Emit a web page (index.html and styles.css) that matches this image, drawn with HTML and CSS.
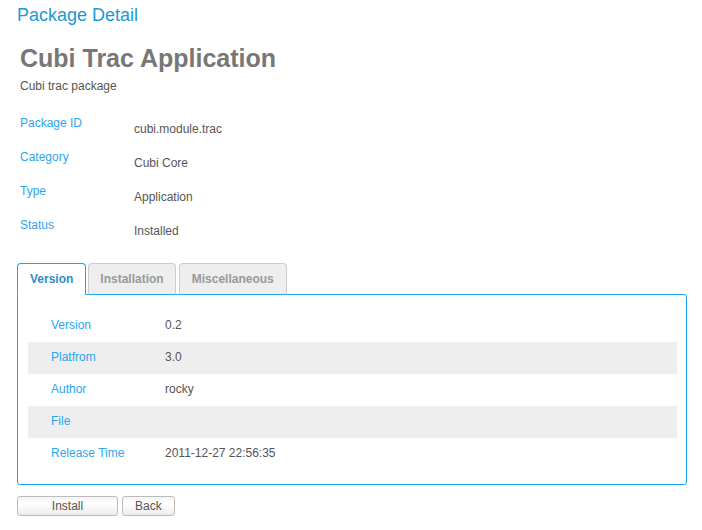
FILE: index.html
```html
<!DOCTYPE html>
<html>
<head>
<meta charset="utf-8">
<title>Package Detail</title>
<link rel="stylesheet" href="styles.css">
</head>
<body>
<div class="page">
  <h1 class="page-title">Package Detail</h1>
  <div class="summary">
    <h2 class="app-title">Cubi Trac Application</h2>
    <p class="app-desc">Cubi trac package</p>
    <div class="info">
      <div class="info-row"><span class="info-label">Package ID</span><span class="info-value">cubi.module.trac</span></div>
      <div class="info-row"><span class="info-label">Category</span><span class="info-value">Cubi Core</span></div>
      <div class="info-row"><span class="info-label">Type</span><span class="info-value">Application</span></div>
      <div class="info-row"><span class="info-label">Status</span><span class="info-value">Installed</span></div>
    </div>
  </div>
  <div class="tabs">
    <div class="tab tab-active">Version</div>
    <div class="tab">Installation</div>
    <div class="tab tab-last">Miscellaneous</div>
  </div>
  <div class="panel">
    <div class="detail-row"><span class="detail-label">Version</span><span class="detail-value">0.2</span></div>
    <div class="detail-row alt"><span class="detail-label">Platfrom</span><span class="detail-value">3.0</span></div>
    <div class="detail-row"><span class="detail-label">Author</span><span class="detail-value">rocky</span></div>
    <div class="detail-row alt"><span class="detail-label">File</span><span class="detail-value"></span></div>
    <div class="detail-row"><span class="detail-label">Release Time</span><span class="detail-value">2011-12-27 22:56:35</span></div>
  </div>
  <div class="actions">
    <button class="btn btn-wide">Install</button>
    <button class="btn">Back</button>
  </div>
</div>
</body>
</html>
```

FILE: styles.css
```css
html, body {
  margin: 0;
  padding: 0;
  background: #fff;
}
body {
  font-family: "Liberation Sans", Arial, sans-serif;
  font-size: 12px;
  color: #555;
}
.page {
  padding: 4px 15px 0 17px;
}
.page-title {
  margin: 0;
  font-size: 18px;
  line-height: 22px;
  font-weight: normal;
  color: #1b9ad2;
}
.summary {
  padding-left: 3px;
}
.app-title {
  margin: 17px 0 0;
  font-size: 25px;
  line-height: 30px;
  font-weight: bold;
  color: #777;
}
.app-desc {
  margin: 6px 0 0;
  line-height: 14px;
  color: #555;
}
.info {
  margin-top: 23px;
}
.info-row {
  display: flex;
  height: 34px;
  line-height: 14px;
}
.info-label {
  width: 114px;
  color: #2aa6ef;
}
.info-value {
  padding-top: 6px;
  color: #555;
}
.tabs {
  display: flex;
  gap: 2px;
  margin-top: 11px;
  position: relative;
  z-index: 1;
}
.tab {
  height: 30px;
  line-height: 30px;
  padding: 0 11px;
  border: 1px solid #ccc;
  border-bottom: 1px solid #1aa6ee;
  border-radius: 4px 4px 0 0;
  background: #eee;
  color: #999;
  font-weight: bold;
  margin-bottom: -1px;
}
.tab-last {
  margin-left: 1px;
  padding: 0 12px;
}
.tab-active {
  padding: 0 12px;
  border-color: #1aa6ee;
  border-bottom-color: #fff;
  background: #fff;
  color: #2f8dc6;
}
.panel {
  border: 1px solid #1aa6ee;
  border-radius: 0 3px 3px 3px;
  padding: 15px 9px 14px 10px;
}
.detail-row {
  display: flex;
  height: 32px;
  align-items: center;
  line-height: 14px;
  padding-bottom: 2px;
  box-sizing: border-box;
}
.detail-row.alt {
  background: #eee;
}
.detail-label {
  width: 114px;
  padding-left: 23px;
  color: #2aa6ef;
}
.detail-value {
  color: #555;
}
.actions {
  display: flex;
  gap: 4px;
  margin-top: 11px;
}
.btn {
  height: 20px;
  padding: 0 12px;
  border: 1px solid #bbb;
  border-radius: 3px;
  background: linear-gradient(#f4f4f4 0%, #fff 35%, #ececec 100%);
  font-family: "Liberation Sans", Arial, sans-serif;
  font-size: 12px;
  line-height: 18px;
  color: #555;
}
.btn-wide {
  width: 101px;
}
```
